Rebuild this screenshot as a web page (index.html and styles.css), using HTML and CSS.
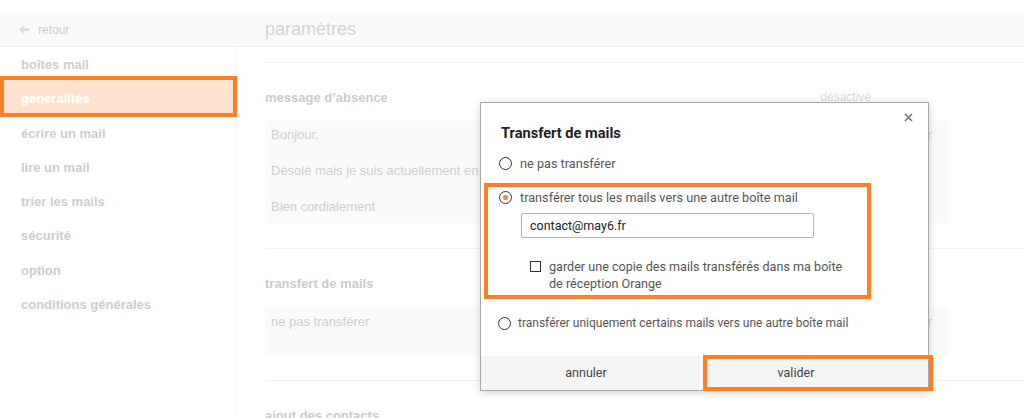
FILE: index.html
```html
<!DOCTYPE html>
<html lang="fr">
<head>
<meta charset="utf-8">
<title>paramètres</title>
<link rel="stylesheet" href="styles.css">
</head>
<body>
<div class="page">
  <header class="header">
    <div class="back">
      <svg class="back-ico" width="10" height="9" viewBox="0 0 10 9"><path d="M0 4.5 L4.5 0 V3 H10 V6 H4.5 V9 Z" fill="#dcdcdc"/></svg>
      <span>retour</span>
    </div>
    <div class="title">paramètres</div>
  </header>
  <div class="layout">
    <nav class="sidebar">
      <div class="item">boîtes mail</div>
      <div class="item active">généralités</div>
      <div class="item">écrire un mail</div>
      <div class="item">lire un mail</div>
      <div class="item">trier les mails</div>
      <div class="item">sécurité</div>
      <div class="item">option</div>
      <div class="item">conditions générales</div>
    </nav>
    <main class="main">
      <section class="section first">
        <div class="sec-head"><span class="sec-title">message d’absence</span><span class="status">désactivé</span></div>
        <div class="box">
          <div class="lines">
            <p>Bonjour,</p>
            <p>Désolé mais je suis actuellement en formation jusqu’au 15 mars.</p>
            <p>Bien cordialement</p>
          </div>
          <span class="edit">modifier</span>
        </div>
      </section>
      <section class="section">
        <div class="sec-head"><span class="sec-title">transfert de mails</span></div>
        <div class="box short">
          <div class="lines"><p>ne pas transférer</p></div>
          <span class="edit">modifier</span>
        </div>
      </section>
      <section class="section">
        <div class="sec-head"><span class="sec-title">ajout des contacts</span></div>
      </section>
    </main>
  </div>

  <div class="modal">
    <svg class="close" width="9" height="9" viewBox="0 0 9 9"><path d="M1 1 L8 8 M8 1 L1 8" stroke="#777" stroke-width="1.6"/></svg>
    <h2 class="m-title">Transfert de mails</h2>
    <label class="opt"><span class="radio"></span><span>ne pas transférer</span></label>
    <div class="group">
      <label class="opt in"><span class="radio on"></span><span>transférer tous les mails vers une autre boîte mail</span></label>
      <div class="field">contact@may6.fr</div>
      <label class="check-row"><span class="check"></span><span class="check-text">garder une copie des mails transférés dans ma boîte de réception Orange</span></label>
    </div>
    <label class="opt last"><span class="radio"></span><span>transférer uniquement certains mails vers une autre boîte mail</span></label>
    <div class="footer">
      <div class="btn">annuler</div>
      <div class="btn">valider</div>
    </div>
  </div>
</div>
</body>
</html>
```

FILE: styles.css
```css
*, *::before, *::after { box-sizing: border-box; }
html, body { margin: 0; padding: 0; background: #fff; }
body { font-family: "Liberation Sans", Arial, sans-serif; color: #ccc; }
.page { position: relative; padding-top: 13px; height: 418px; overflow: hidden; }

.header { display: flex; align-items: center; height: 34px; background: #fafafa; border-bottom: 1px solid #f2f2f2; }
.back { width: 265px; padding-left: 19px; display: flex; align-items: center; gap: 9px; font-size: 12px; color: #cfcfcf; }
.title { font-size: 18px; color: #d4d4d4; }

.layout { display: flex; }
.sidebar { width: 236px; padding-top: 1px; border-right: 1px solid #f4f4f4; height: 400px; flex: none; }
.item { height: 34.3px; line-height: 34px; padding-left: 21px; font-size: 13px; font-weight: 700; color: #cdcdcd; }
.item.active { position: relative; z-index: 0; color: #fff; }
.item.active::before { content: ""; position: absolute; z-index: -1; left: 0; top: -6px; width: 237px; height: 41px; border: 4px solid #ff7f27; background: #fde2cf; }

.main { flex: 1; padding: 15px 0 0 29px; }
.section { border-top: 1px solid #f3f3f3; padding-top: 24px; padding-bottom: 25px; }
.sec-head { display: flex; justify-content: space-between; align-items: center; height: 20px; margin-bottom: 14px; margin-right: 76px; }
.sec-title { font-size: 13px; font-weight: 700; color: #cbcbcb; }
.status { font-size: 12px; color: #d8d8d8; padding-right: 77px; }
.box { display: flex; justify-content: space-between; background: #fafafa; margin-right: 76px; padding: 4px 16px 6px 6px; }
.box.short { height: 48px; padding-top: 5px; }
.lines p { margin: 0 0 16px; height: 20px; line-height: 20px; font-size: 13px; color: #cfcfcf; white-space: nowrap; }
.lines p:last-child { margin-bottom: 0; }
.edit { line-height: 20px; font-size: 13px; color: #d6d6d6; }

.modal { position: absolute; left: 480px; top: 102px; width: 449px; height: 289px; background: #fff; border: 1px solid #a9a9a9; box-shadow: 0 2px 8px rgba(0,0,0,0.18); font-family: Roboto, "Liberation Sans", sans-serif; display: flex; flex-direction: column; }
.close { position: absolute; right: 15px; top: 10px; }
.m-title { margin: 19px 0 0 20px; font-size: 14.6px; font-weight: 700; color: #222; line-height: 22px; }
.opt { display: flex; align-items: center; gap: 8px; height: 20px; margin-top: 9px; padding-left: 18px; font-size: 12.7px; color: #555; }
.radio { width: 13px; height: 13px; border: 1.5px solid #333; border-radius: 50%; display: flex; align-items: center; justify-content: center; flex: none; }
.radio.on::after { content: ""; width: 5px; height: 5px; border-radius: 50%; background: #ff7f27; }
.group { margin: 10px 0 0 3px; width: 387px; height: 116px; border: 4px solid #ff7f27; }
.opt.in { margin-top: 0; padding-left: 11px; }
.field { margin: 6px 0 0 33px; width: 293px; height: 25px; border: 1px solid #b5b5b5; border-radius: 2px; padding-left: 8px; line-height: 23px; font-size: 12.5px; color: #222; }
.check-row { display: flex; gap: 8px; margin: 20px 0 0 42px; font-size: 12.6px; color: #555; line-height: 17px; }
.check { width: 11px; height: 11px; border: 1.5px solid #333; margin-top: 3px; flex: none; }
.check-text { width: 300px; }
.opt.last { margin-top: 14px; padding-left: 17px; gap: 7px; font-size: 12px; }
.footer { margin-top: auto; position: relative; display: flex; height: 34px; background: #f5f5f5; }
.btn { width: 210px; line-height: 34px; text-align: center; font-size: 12.5px; color: #444; }
.footer::after { content: ""; position: absolute; left: 222px; right: -5px; top: -1px; bottom: -1px; border: 4px solid #ff7f27; }
```
